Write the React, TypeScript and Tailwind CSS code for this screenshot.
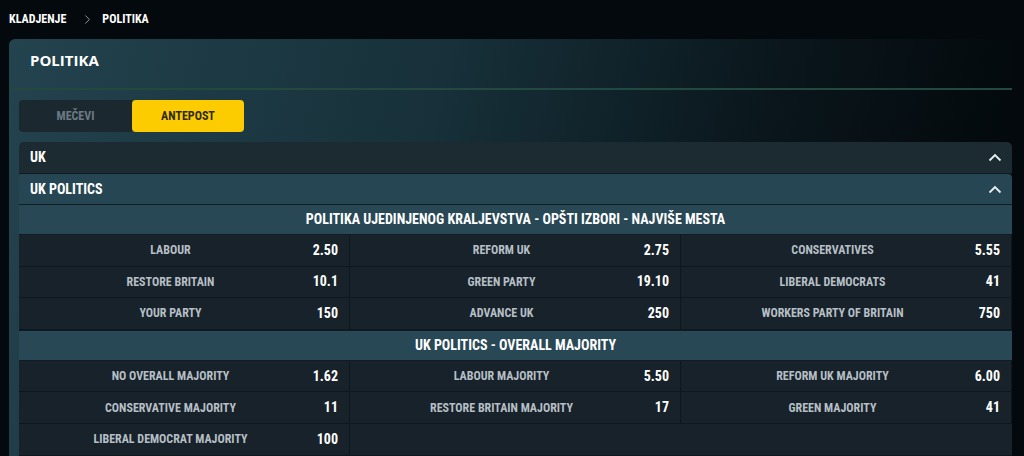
import { ChevronRight } from 'lucide-react';

type Odd = { label: string; value: string };

const markets: { title: string; rows: Odd[][] }[] = [
  {
    title: 'POLITIKA UJEDINJENOG KRALJEVSTVA - OPŠTI IZBORI - NAJVIŠE MESTA',
    rows: [
      [
        { label: 'LABOUR', value: '2.50' },
        { label: 'REFORM UK', value: '2.75' },
        { label: 'CONSERVATIVES', value: '5.55' },
      ],
      [
        { label: 'RESTORE BRITAIN', value: '10.1' },
        { label: 'GREEN PARTY', value: '19.10' },
        { label: 'LIBERAL DEMOCRATS', value: '41' },
      ],
      [
        { label: 'YOUR PARTY', value: '150' },
        { label: 'ADVANCE UK', value: '250' },
        { label: 'WORKERS PARTY OF BRITAIN', value: '750' },
      ],
    ],
  },
  {
    title: 'UK POLITICS - OVERALL MAJORITY',
    rows: [
      [
        { label: 'NO OVERALL MAJORITY', value: '1.62' },
        { label: 'LABOUR MAJORITY', value: '5.50' },
        { label: 'REFORM UK MAJORITY', value: '6.00' },
      ],
      [
        { label: 'CONSERVATIVE MAJORITY', value: '11' },
        { label: 'RESTORE BRITAIN MAJORITY', value: '17' },
        { label: 'GREEN MAJORITY', value: '41' },
      ],
      [{ label: 'LIBERAL DEMOCRAT MAJORITY', value: '100' }],
    ],
  },
];

const cond = "font-['Roboto_Condensed','Roboto',sans-serif]";

function ChevronUp() {
  return (
    <svg width="14" height="9" viewBox="0 0 14 9" fill="none">
      <path d="M1.5 7.5L7 2L12.5 7.5" stroke="#e8eef1" strokeWidth="1.8" />
    </svg>
  );
}

function OddCell({ odd }: { odd?: Odd }) {
  if (!odd) return <div className="h-[30.6px]" />;
  return (
    <div className="flex h-[30.6px] items-center border-r border-[#0e171c] pl-[12px] pr-[11px]">
      <span className="flex-1 text-center text-[12px] font-bold text-[#b6bfc5]">{odd.label}</span>
      <span className="flex w-[28px] justify-end whitespace-nowrap text-[14px] font-bold text-white">
        {odd.value}
      </span>
    </div>
  );
}

export default function App() {
  return (
    <div className={`min-h-screen bg-[#03090c] pb-4 ${cond}`}>
      <div className="flex h-[38px] items-center pl-[9px] text-[12px] font-bold text-white">
        <span>KLADJENJE</span>
        <ChevronRight size={15} strokeWidth={1.4} className="ml-[14px] mr-[7px] text-[#a3acb1]" />
        <span>POLITIKA</span>
      </div>

      <div className="ml-[9px] mt-px w-[1003px] rounded-t-[6px] bg-[linear-gradient(105deg,#23434e_0%,#173039_40%,#0a161c_70%,#03090c_92%)]">
        <div className="h-[49px] pl-[21px] pt-[11px] font-['Open_Sans',sans-serif] text-[15px] font-bold leading-[20px] text-white">
          POLITIKA
        </div>
        <div className="h-[2px] bg-[#234840]" />

        <div className="pl-[10px] pt-[10px]">
          <div className="flex h-[32px] w-[225px] text-[12px] font-bold">
            <div className="flex w-[113px] items-center justify-center rounded-l-[4px] bg-[#1b2830] text-[#6c7a83]">
              MEČEVI
            </div>
            <div className="flex flex-1 items-center justify-center rounded-[4px] bg-[#fccc00] text-[#2c2a10]">
              ANTEPOST
            </div>
          </div>

          <div className="mt-[10px] overflow-hidden rounded-t-[5px]">
            <div className="flex h-[32px] items-center justify-between border-b border-[#0f1a20] bg-[#1c2a32] pl-[11px] pr-[10px] text-[14px] font-bold text-white">
              <span>UK</span>
              <ChevronUp />
            </div>
            <div className="flex h-[30px] items-center justify-between rounded-t-[4px] bg-[#264653] pl-[11px] pr-[10px] text-[14px] font-bold text-white">
              <span>UK POLITICS</span>
              <ChevronUp />
            </div>

            {markets.map((m) => (
              <div key={m.title}>
                <div className="flex h-[31px] items-center justify-center border-y border-[#101c22] bg-[#284856] text-[14px] font-bold text-white">
                  {m.title}
                </div>
                {m.rows.map((row, i) => (
                  <div key={i} className="grid grid-cols-3 border-b border-[#0e171c] bg-[#17222a]">
                    {[0, 1, 2].map((c) => (
                      <OddCell key={c} odd={row[c]} />
                    ))}
                  </div>
                ))}
              </div>
            ))}
          </div>
        </div>
      </div>
    </div>
  );
}
